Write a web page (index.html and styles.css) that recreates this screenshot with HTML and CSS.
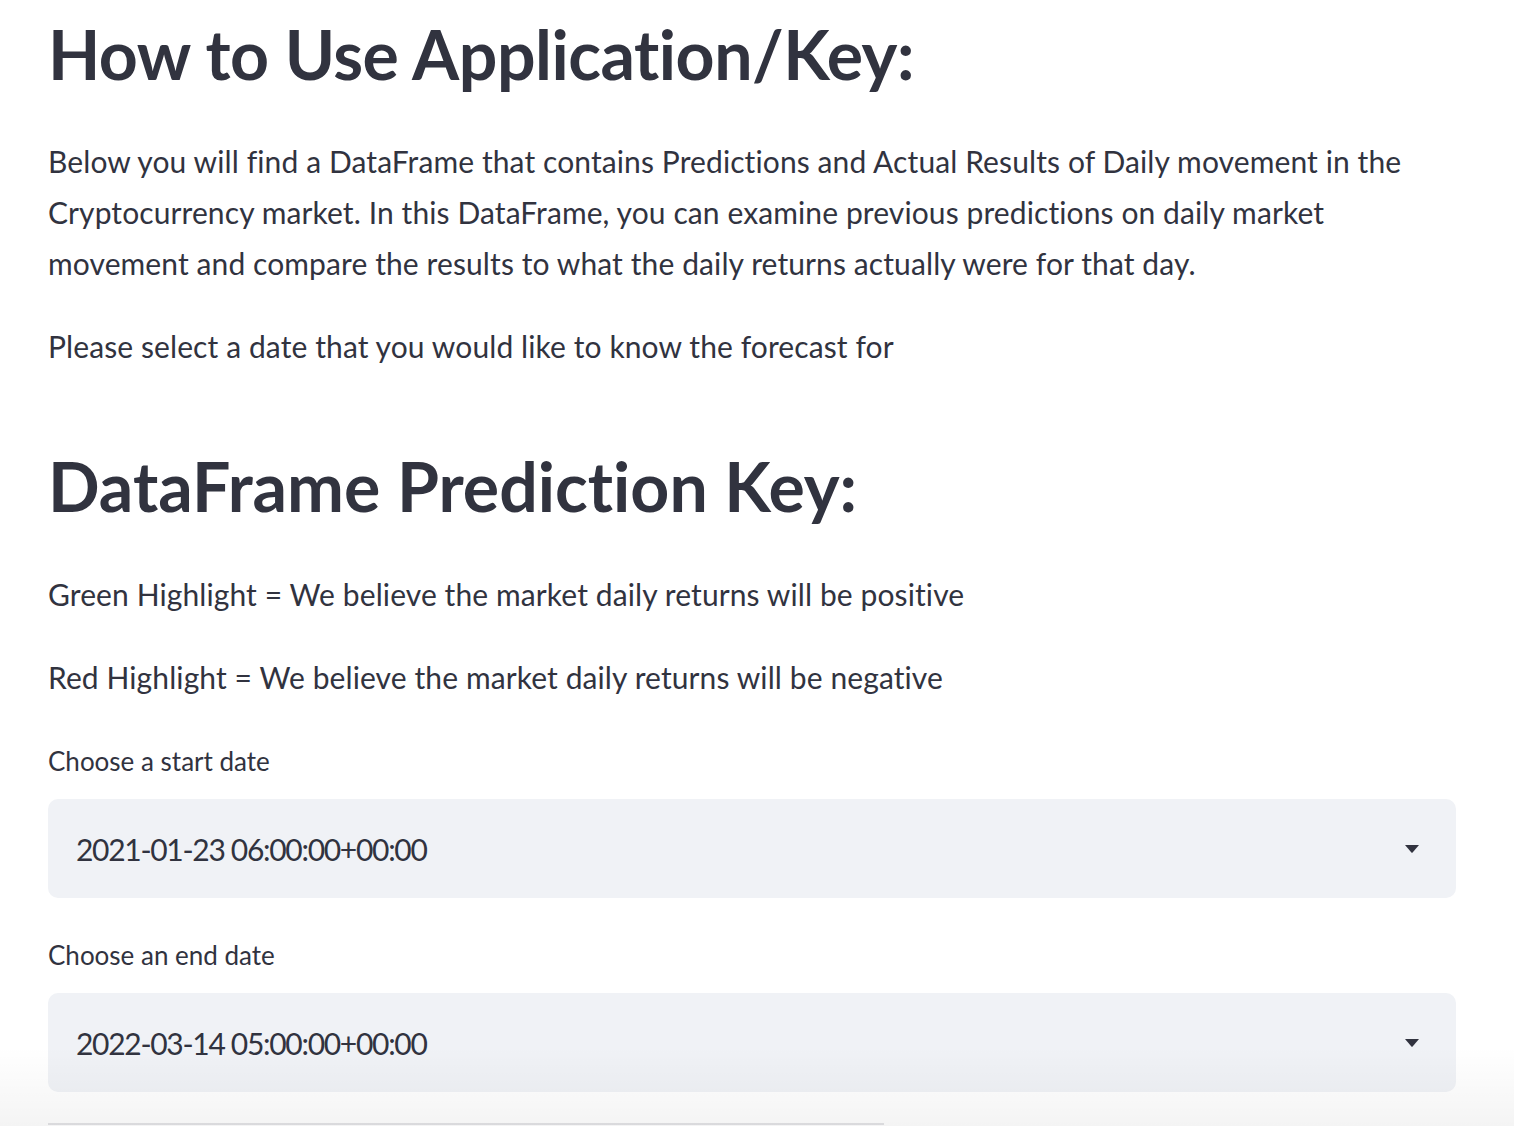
FILE: index.html
```html
<!DOCTYPE html>
<html lang="en">
<head>
<meta charset="utf-8">
<title>Crypto Prediction</title>
<link rel="stylesheet" href="styles.css">
</head>
<body>
<main class="main">
  <h1 class="title">How to Use Application/Key:</h1>
  <p class="text intro">Below you will find a DataFrame that contains Predictions and Actual Results of Daily movement in the Cryptocurrency market. In this DataFrame, you can examine previous predictions on daily market movement and compare the results to what the daily returns actually were for that day.</p>
  <p class="text">Please select a date that you would like to know the forecast for</p>

  <h1 class="title key">DataFrame Prediction Key:</h1>
  <p class="text green">Green Highlight = We believe the market daily returns will be positive</p>
  <p class="text red">Red Highlight = We believe the market daily returns will be negative</p>

  <div class="field first">
    <label class="label">Choose a start date</label>
    <div class="select">
      <span class="value">2021-01-23 06:00:00+00:00</span>
      <svg class="caret" width="14" height="8" viewBox="0 0 14 8"><path d="M0 0H14L7.6 7.4Q7 8 6.4 7.4Z" fill="#31333f"/></svg>
    </div>
  </div>

  <div class="field">
    <label class="label">Choose an end date</label>
    <div class="select">
      <span class="value">2022-03-14 05:00:00+00:00</span>
      <svg class="caret" width="14" height="8" viewBox="0 0 14 8"><path d="M0 0H14L7.6 7.4Q7 8 6.4 7.4Z" fill="#31333f"/></svg>
    </div>
  </div>

  <div class="frame"></div>
</main>
<div class="fade"></div>
</body>
</html>
```
FILE: styles.css
```css
html, body {
  margin: 0;
  padding: 0;
  background: #ffffff;
  height: 1126px;
  overflow: hidden;
}
body {
  font-family: "Lato", "Open Sans", sans-serif;
  color: #31333f;
  position: relative;
  font-variant-ligatures: none;
}
.main {
  width: 1408px;
  padding: 13px 0 0 48px;
}
.title {
  margin: 0;
  font-size: 68px;
  line-height: 1.2;
  font-weight: 700;
  letter-spacing: -0.5px;
  color: #31333f;
}
.title.key {
  margin-top: 73px;
  letter-spacing: 0;
}
.text {
  margin: 0 0 32px 0;
  font-size: 30px;
  line-height: 51.2px;
  letter-spacing: 0.1px;
}
.intro {
  margin-top: 41px;
}
.green {
  margin-top: 42px;
}
.red {
  margin-bottom: 0;
}
.field {
  display: flex;
  flex-direction: column;
  margin-top: 35px;
}
.field.first {
  margin-top: 36px;
}
.label {
  font-size: 26px;
  line-height: 44.8px;
  margin-bottom: 15px;
}
.select {
  height: 99px;
  box-sizing: border-box;
  background: #f0f2f6;
  border-radius: 10px;
  display: flex;
  align-items: center;
  justify-content: space-between;
  padding: 0 37px 0 28px;
}
.value {
  font-size: 30px;
  letter-spacing: -1.3px;
}
.caret {
  display: block;
}
.frame {
  margin-top: 31px;
  width: 836px;
  height: 10px;
  border-top: 2px solid #e3e3e6;
}
.fade {
  position: absolute;
  left: 0;
  right: 0;
  bottom: 0;
  height: 80px;
  background: linear-gradient(to bottom, rgba(0,0,0,0), rgba(0,0,0,0.045));
  pointer-events: none;
}
```
